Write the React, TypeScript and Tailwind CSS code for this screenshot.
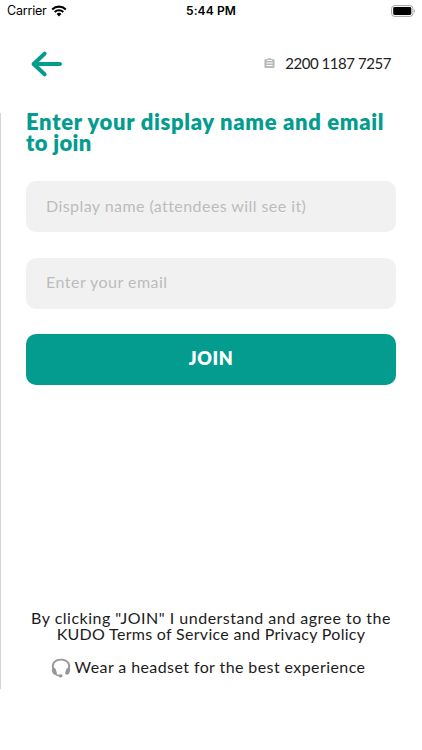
import React from "react";

const StatusBar: React.FC = () => (
  <div className="relative flex h-[22px] items-center justify-between pl-[7px] pr-[6px] font-['Inter'] text-black">
    <div className="flex items-center gap-[4px]">
      <span className="text-[12.5px] leading-none tracking-[-0.2px]">Carrier</span>
      <svg width="16" height="12" viewBox="0 0 16 12" fill="none">
        <path d="M1.2 4.4a9.8 9.8 0 0 1 13.6 0" stroke="#000" strokeWidth="2.1" />
        <path d="M3.7 7a6.2 6.2 0 0 1 8.6 0" stroke="#000" strokeWidth="2" />
        <path d="M5.6 9a3.5 3.5 0 0 1 4.8 0L8 11.6Z" fill="#000" />
      </svg>
    </div>
    <span className="absolute inset-x-0 top-[5px] text-center text-[12px] font-semibold leading-none tracking-[0.1px]">5:44 PM</span>
    <svg className="-mt-px" width="25" height="12" viewBox="0 0 25 12" fill="none">
      <rect x="0.6" y="0.6" width="21.3" height="10.8" rx="3" stroke="#a3a3a3" />
      <rect x="2.2" y="2.1" width="18.1" height="7.8" rx="1.4" fill="#000" />
      <path d="M23.2 4.2c1.2.5 1.2 3.1 0 3.6Z" fill="#999" />
    </svg>
  </div>
);

const Header: React.FC = () => (
  <header className="mt-[22px] flex h-10 items-center justify-between px-[31px]">
    <button aria-label="Back">
      <svg width="31" height="26" viewBox="0 0 31 26" fill="none" stroke="#049c8e" strokeWidth="4" strokeLinecap="round" strokeLinejoin="round">
        <path d="M13.5 2.7 2.7 13l10.8 10.3M3 13h26" />
      </svg>
    </button>
    <div className="-mt-[2px] flex items-center gap-[10px]">
      <svg width="11" height="11" viewBox="0 0 11 11">
        <path d="M1.6 1.3h1.6C3.5.5 4.2.3 5.5.3s2 .2 2.3 1h1.6c.8 0 1.2.5 1.2 1.2v6.2c0 .8-.5 1.3-1.3 1.3H1.7C.9 10 .4 9.5.4 8.7V2.5c0-.7.4-1.2 1.2-1.2Z" fill="#b9b9b9" />
        <path d="M3 2.5h5M2.4 5h6.2M2.4 7.5h6.2" stroke="#fff" strokeWidth="1" />
      </svg>
      <span className="text-[15px] leading-none tracking-[-0.45px] text-[#222]">2200 1187 7257</span>
    </div>
  </header>
);

const App: React.FC = () => {
  return (
    <div className="flex h-[750px] w-[422px] flex-col overflow-hidden whitespace-nowrap bg-white font-['Lato',sans-serif]">
      <StatusBar />
      <Header />
      <main className="mt-[29px] flex h-[576px] flex-col border-l border-[#d4d4d4] pl-[25px] pr-[26px]">
        <h1 className="-mt-[2px] text-[22px] font-extrabold leading-[21px] tracking-[0.67px] text-[#049c8e]">
          Enter your display name and email
          <br />
          <span className="tracking-[0.35px]">to join</span>
        </h1>
        <input
          className="mt-[28px] h-[51px] w-full shrink-0 rounded-[10px] bg-[#f1f1f1] px-5 pb-[3px] text-[16px] tracking-[0.43px] placeholder:text-[#bcbcbe]"
          placeholder="Display name (attendees will see it)"
        />
        <input
          className="mt-[25.5px] h-[51px] w-full shrink-0 rounded-[10px] bg-[#f1f1f1] px-5 pb-[3px] text-[16px] tracking-[0.48px] placeholder:text-[#bcbcbe]"
          placeholder="Enter your email"
        />
        <button className="mt-[25.5px] h-[51px] w-full shrink-0 rounded-[10px] bg-[#049c8e] pb-[3px] text-[18px] font-extrabold tracking-[0.6px] text-white">
          JOIN
        </button>
        <div className="mt-auto text-center text-[16px] leading-4 text-[#1c1c1c]">
          <p className="tracking-[0.49px]">By clicking "JOIN" I understand and agree to the</p>
          <p className="tracking-[0.3px]">KUDO Terms of Service and Privacy Policy</p>
        </div>
        <div className="mb-[11px] mt-[13px] flex items-center justify-center gap-[4px] pr-[6px] text-[16px] leading-5 text-[#1c1c1c]">
          <svg className="mt-[3px]" width="20" height="20" viewBox="0 0 20 20" fill="none">
            <path d="M3.2 13C-.6 6 4 1.6 10 1.6S20.6 6 16.8 13" stroke="#979797" strokeWidth="1.9" />
            <path d="M2 10.2c1.2-.5 2.3 0 2.7 1l1.1 3.2c.3 1-.1 1.9-1.2 2.2-1.2.3-2.3-.3-2.9-1.5C.7 13 .4 11 2 10.2ZM18 10.2c-1.2-.5-2.3 0-2.7 1l-1.1 3.2c-.3 1 .1 1.9 1.2 2.2 1.2.3 2.3-.3 2.9-1.5 1-2.1 1.3-4.1-.3-4.9Z" fill="#979797" />
            <path d="M4.2 16c1.3 1.2 2.8 1.7 4.7 1.8" stroke="#979797" strokeWidth="1.6" />
            <ellipse cx="9.6" cy="17.8" rx="2" ry="1.6" fill="#979797" />
          </svg>
          <span className="tracking-[0.41px]">Wear a headset for the best experience</span>
        </div>
      </main>
    </div>
  );
};

export default App;
